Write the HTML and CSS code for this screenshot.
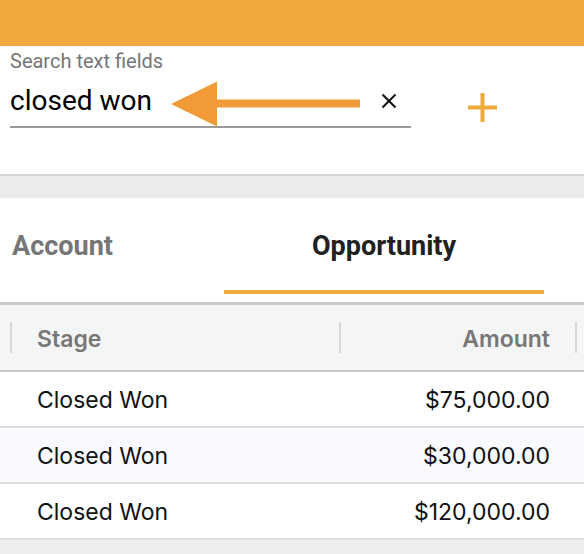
FILE: index.html
```html
<!DOCTYPE html>
<html>
<head>
<meta charset="utf-8">
<link rel="stylesheet" href="styles.css">
</head>
<body>
<div class="page">
  <div class="topbar"></div>
  <div class="search-section">
    <div class="search-field">
      <div class="search-label">Search text fields</div>
      <div class="search-input-row">
        <span class="search-value">closed won</span>
        <svg class="clear-icon" width="16" height="16" viewBox="0 0 16 16"><path d="M1.5 1.5 L14.5 14.5 M14.5 1.5 L1.5 14.5" stroke="#111" stroke-width="2" fill="none"/></svg>
      </div>
    </div>
    <svg class="add-icon" width="29" height="29" viewBox="0 0 29 29"><rect x="0" y="12.5" width="29" height="4" fill="#f0aa3c"/><rect x="12.5" y="0" width="4" height="29" fill="#f0aa3c"/></svg>
    <svg class="arrow" width="192" height="49" viewBox="0 0 192 49"><polygon points="1,24 47,1.5 47,19.5 190,19.5 190,27.5 47,27.5 47,46.5" fill="#f09a38"/></svg>
  </div>
  <div class="spacer"></div>
  <div class="tabs">
    <div class="tab tab-account">Account</div>
    <div class="tab tab-opportunity">
      <span class="tab-text">Opportunity</span>
      <div class="tab-indicator"></div>
    </div>
  </div>
  <div class="table">
    <div class="thead">
      <div class="sep"></div>
      <div class="th col-stage">Stage</div>
      <div class="sep"></div>
      <div class="th col-amount">Amount</div>
      <div class="sep"></div>
    </div>
    <div class="tr">
      <div class="td col-stage">Closed Won</div>
      <div class="td col-amount">$75,000.00</div>
    </div>
    <div class="tr alt">
      <div class="td col-stage">Closed Won</div>
      <div class="td col-amount">$30,000.00</div>
    </div>
    <div class="tr">
      <div class="td col-stage">Closed Won</div>
      <div class="td col-amount">$120,000.00</div>
    </div>
  </div>
  <div class="footer-fill"></div>
</div>
</body>
</html>
```
FILE: styles.css
```css
* { box-sizing: border-box; }
html, body { margin: 0; padding: 0; }
body {
  width: 584px;
  height: 554px;
  overflow: hidden;
  background: #eceeee;
  font-family: Roboto, "Noto Sans", sans-serif;
}
.page {
  display: flex;
  flex-direction: column;
  height: 554px;
}
.topbar {
  height: 46px;
  background: #f0a93c;
}
.search-section {
  position: relative;
  height: 130px;
  background: #fff;
  border-bottom: 2px solid #d6d6d6;
  display: flex;
  align-items: flex-start;
  padding-left: 10px;
}
.search-field {
  width: 401px;
  margin-top: 5px;
}
.search-label {
  font-size: 20px;
  line-height: 20px;
  color: #767676;
}
.search-input-row {
  margin-top: 13px;
  height: 44px;
  border-bottom: 2px solid #9a9a9a;
  display: flex;
  align-items: flex-start;
}
.search-value {
  font-size: 28px;
  line-height: 34px;
  color: #000;
  flex: 1;
}
.clear-icon {
  margin-top: 9px;
  margin-right: 14px;
}
.add-icon {
  margin-left: 57px;
  margin-top: 47px;
}
.arrow {
  position: absolute;
  left: 170px;
  top: 34px;
}
.spacer {
  height: 22px;
  background: #ececec;
}
.tabs {
  height: 107px;
  background: #fff;
  border-bottom: 3px solid #c7c9cc;
  display: flex;
  font-weight: 700;
  font-size: 27px;
  line-height: 32px;
}
.tab {
  padding-top: 32px;
}
.tab-account {
  width: 224px;
  padding-left: 12px;
  color: #767676;
}
.tab-opportunity {
  width: 320px;
  display: flex;
  flex-direction: column;
  align-items: center;
  color: #212121;
}
.tab-indicator {
  margin-top: 28px;
  width: 100%;
  height: 4px;
  background: #f0aa3c;
}
.table {
  font-family: Inter, "Liberation Sans", sans-serif;
  font-size: 23px;
}
.thead {
  height: 67px;
  background: #f4f5f5;
  border-bottom: 2px solid #c8cbcd;
  display: flex;
  align-items: center;
  padding-left: 10px;
  color: #777;
  font-weight: 600;
}
.th {
  padding-top: 3px;
  line-height: 62px;
}
.sep {
  width: 2px;
  height: 31px;
  background: #d6d8da;
}
.th.col-stage { width: 327px; padding-left: 25px; }
.th.col-amount { width: 234px; padding-right: 25px; text-align: right; }
.tr {
  height: 56px;
  background: #fff;
  border-bottom: 2px solid #dcdddf;
  display: flex;
  padding-top: 2px;
  line-height: 52px;
  color: #111;
  padding-left: 12px;
}
.tr.alt { background: #f9fafd; }
.td.col-stage { width: 327px; padding-left: 25px; }
.td.col-amount { width: 236px; padding-right: 25px; text-align: right; }
.footer-fill {
  flex: 1;
  background: #eceeee;
}
```
